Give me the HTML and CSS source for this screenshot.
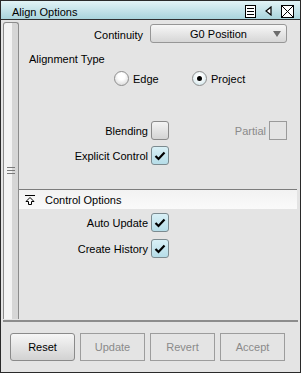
FILE: index.html
```html
<!DOCTYPE html>
<html lang="en">
<head>
    <meta charset="UTF-8">
    <title>Align Options</title>
    <link rel="stylesheet" href="styles.css">
</head>
<body>
<div class="window">
    <div class="titlebar">
        <span class="title">Align Options</span>
        <div class="title-icons">
            <svg width="11" height="13" viewBox="0 0 11 13">
                <rect x="0.5" y="0.5" width="10" height="12" fill="#fff" stroke="#000"/>
                <path d="M2 3.5h7M2 6.5h7M2 9.5h7" stroke="#000"/>
            </svg>
            <svg width="7" height="10" viewBox="0 0 7 10">
                <path d="M6 1 L1 5 L6 9 Z" fill="#fff" stroke="#000" stroke-width="1.2"/>
            </svg>
            <svg width="13" height="13" viewBox="0 0 13 13">
                <rect x="0.5" y="0.5" width="12" height="12" fill="#fff" stroke="#000"/>
                <path d="M1 1 L12 12 M12 1 L1 12" stroke="#000"/>
            </svg>
        </div>
    </div>

    <div class="main">
        <div class="strip">
            <div class="grip"><span></span><span></span><span></span></div>
        </div>
        <div class="panel">
            <div class="row row-continuity">
                <label class="lbl lbl-cont">Continuity</label>
                <div class="dropdown">
                    <span>G0 Position</span>
                    <svg class="arrow" width="8" height="6" viewBox="0 0 8 6"><path d="M0 0h8L4 6z" fill="#6c6c6c"/></svg>
                </div>
            </div>

            <div class="section-label">Alignment Type</div>
            <div class="radios">
                <div class="radio-opt"><span class="radio"></span>Edge</div>
                <div class="radio-opt"><span class="radio on"></span>Project</div>
            </div>

            <div class="row row-blend">
                <label class="lbl">Blending</label>
                <span class="check"></span>
                <span class="spacer"></span>
                <label class="lbl-off">Partial</label>
                <span class="check off"></span>
            </div>
            <div class="row row-explicit">
                <label class="lbl">Explicit Control</label>
                <span class="check on"><svg width="12" height="10" viewBox="0 0 12 10"><path d="M1.5 5 L4.5 8 L10.5 1.5" fill="none" stroke="#000" stroke-width="2.2"/></svg></span>
            </div>

            <div class="group-header">
                <svg width="10" height="10" viewBox="0 0 10 10">
                    <path d="M0 0.5h10" stroke="#000"/>
                    <path d="M5 2.5 L1 6.5 H3.5 V9.5 H6.5 V6.5 H9 Z" fill="#fff" stroke="#000"/>
                </svg>
                <span>Control Options</span>
            </div>

            <div class="row row-auto">
                <label class="lbl">Auto Update</label>
                <span class="check on"><svg width="12" height="10" viewBox="0 0 12 10"><path d="M1.5 5 L4.5 8 L10.5 1.5" fill="none" stroke="#000" stroke-width="2.2"/></svg></span>
            </div>
            <div class="row row-history">
                <label class="lbl">Create History</label>
                <span class="check on"><svg width="12" height="10" viewBox="0 0 12 10"><path d="M1.5 5 L4.5 8 L10.5 1.5" fill="none" stroke="#000" stroke-width="2.2"/></svg></span>
            </div>
        </div>
    </div>

    <div class="buttons">
        <button class="btn">Reset</button>
        <button class="btn disabled">Update</button>
        <button class="btn disabled">Revert</button>
        <button class="btn disabled">Accept</button>
    </div>
</div>
</body>
</html>
```

FILE: styles.css
```css
body {
    margin: 0;
    font-family: "Liberation Sans", Arial, sans-serif;
    font-size: 11px;
    color: #000;
    background: #e4e4e4;
}
.window {
    width: 301px;
    height: 373px;
    box-sizing: border-box;
    border: 1px solid #2a2a2a;
    background: #e4e4e4;
    display: flex;
    flex-direction: column;
}
.titlebar {
    height: 18px;
    border-bottom: 1px solid #303030;
    background: linear-gradient(#e2f3f6, #a9d4dc);
    display: flex;
    align-items: center;
    padding-left: 11px;
    padding-right: 6px;
}
.title {
    flex: 1;
    padding-top: 3px;
}
.title-icons {
    display: flex;
    align-items: center;
    gap: 9px;
    padding-top: 2px;
}
.title-icons svg {
    display: block;
}
.main {
    height: 300px;
    display: flex;
    padding-left: 2px;
}
.strip {
    width: 14px;
    margin-top: 2px;
    height: 296px;
    border: 1px solid #8c8c8c;
    border-bottom: none;
    border-radius: 3px 3px 0 0;
    background: linear-gradient(to right, #f3f3f3 0, #f3f3f3 55%, #d6d6d6 60%, #d6d6d6 100%);
    position: relative;
}
.grip {
    position: absolute;
    left: 3px;
    top: 144px;
    display: flex;
    flex-direction: column;
    gap: 2px;
}
.grip span {
    display: block;
    width: 8px;
    height: 1px;
    background: #7a7a7a;
}
.panel {
    width: 278px;
    display: flex;
    flex-direction: column;
}
.row {
    display: flex;
    align-items: center;
}
.lbl {
    width: 129px;
    text-align: right;
    margin-right: 3px;
}
.row-continuity {
    margin-top: 4px;
}
.lbl-cont {
    width: 124px;
    margin-right: 7px;
    padding-top: 2px;
}
.dropdown {
    width: 135px;
    height: 17px;
    border: 1px solid #969696;
    border-radius: 3px;
    background: linear-gradient(#f7f7f7, #d6d6d6);
    display: flex;
    align-items: center;
    justify-content: center;
    position: relative;
}
.dropdown .arrow {
    position: absolute;
    right: 5px;
    top: 6px;
}
.section-label {
    margin-top: 9px;
    margin-left: 10px;
    line-height: 14px;
}
.radios {
    display: flex;
    margin-top: 5px;
    padding-left: 95px;
}
.radio-opt {
    width: 78px;
    display: flex;
    align-items: center;
    gap: 4px;
}
.radio {
    width: 13px;
    height: 13px;
    border: 1px solid #8e8e8e;
    border-radius: 50%;
    background: radial-gradient(circle at 50% 35%, #ffffff 30%, #d0d0d0 100%);
    position: relative;
}
.radio.on {
    background: radial-gradient(circle at 50% 40%, #ffffff 25%, #c5dfe5 100%);
}
.radio.on::after {
    content: "";
    position: absolute;
    left: 4px;
    top: 4px;
    width: 5px;
    height: 5px;
    border-radius: 50%;
    background: #000;
}
.check {
    width: 16px;
    height: 17px;
    border: 1px solid #8a8a8a;
    border-radius: 3px;
    background: linear-gradient(#f4f4f4, #d4d4d4);
    display: flex;
    align-items: center;
    justify-content: center;
}
.check.on {
    border-color: #7b8a8f;
    background: linear-gradient(#d9f0f6, #b6dde8);
}
.check.off {
    border-radius: 0;
    border-color: #9a9a9a;
    background: none;
}
.spacer {
    flex: 1;
}
.lbl-off {
    color: #8a8a8a;
    margin-right: 3px;
}
.row-blend {
    margin-top: 35px;
    padding-right: 10px;
}
.row-explicit {
    margin-top: 6px;
}
.group-header {
    margin-top: 24px;
    height: 19px;
    border-top: 1px solid #7c7c7c;
    background: linear-gradient(#f2f2f2, #fafafa);
    display: flex;
    align-items: center;
    padding-left: 6px;
    gap: 10px;
}
.group-header svg {
    display: block;
}
.row-auto {
    margin-top: 4px;
}
.row-history {
    margin-top: 7px;
}
.buttons {
    border-top: 2px solid #8c8c8c;
    margin-left: 2px;
    margin-right: 2px;
    padding-top: 11px;
    padding-left: 7px;
    display: flex;
    gap: 5px;
}
.btn {
    width: 65px;
    height: 28px;
    font-family: "Liberation Sans", Arial, sans-serif;
    font-size: 11px;
    border: 1px solid #8a8a8a;
    border-radius: 3px;
    background: linear-gradient(#f6f6f6, #d2d2d2);
    color: #000;
    padding: 0;
}
.btn.disabled {
    border-radius: 0;
    border-color: #9c9c9c;
    background: none;
    color: #8a8a8a;
}
```
